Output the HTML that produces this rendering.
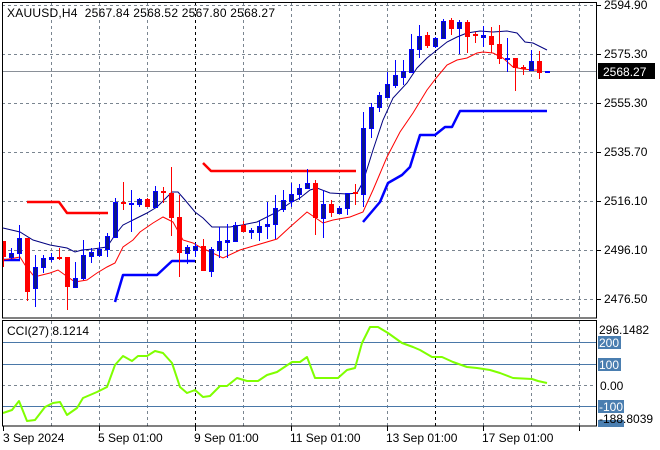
<!DOCTYPE html>
<html><head><meta charset="utf-8"><style>
html,body{margin:0;padding:0;background:#fff;width:660px;height:450px;overflow:hidden}
svg{display:block}
text{font-family:"Liberation Sans",sans-serif;font-size:12px;fill:#000}
</style></head><body>
<svg width="660" height="450" viewBox="0 0 660 450" xmlns="http://www.w3.org/2000/svg">
<rect width="660" height="450" fill="#fff"/>
<g stroke="#7a8590" stroke-width="1" stroke-dasharray="3,3">
<path d="M51.5 2V318M99.5 2V318M147.5 2V318M243.5 2V318M291.5 2V318M339.5 2V318M387.5 2V318M483.5 2V318M531.5 2V318M579.5 2V318"/>
<path d="M51.5 321V426M99.5 321V426M147.5 321V426M243.5 321V426M291.5 321V426M339.5 321V426M387.5 321V426M483.5 321V426M531.5 321V426M579.5 321V426"/>
<path d="M2 5.5H597M2 54.5H597M2 103.5H597M2 152.5H597M2 201.5H597M2 250.5H597M2 299.5H597"/>
<path d="M2 385.5H597"/>
</g>
<g stroke="#000" stroke-width="1" stroke-dasharray="3,3">
<path d="M195.5 2V318M435.5 2V318M195.5 321V426M435.5 321V426"/>
</g>
<path d="M2 71.5H597" stroke="#8a9098" stroke-width="1"/>
<path d="M2 342.5H597M2 364.5H597M2 406.5H597" stroke="#4a78a8" stroke-width="1"/>

<g fill="none" stroke-width="2.5" stroke-linejoin="round">
<path d="M27 202H59L67 213H108" stroke="#ff0000"/>
<path d="M203 163L211 171H356" stroke="#ff0000"/>
<path d="M3 260H20" stroke="#0000ff"/>
<path d="M115 302L123 275H157L172 261H195" stroke="#0000ff"/>
<path d="M363 222L380 202L388 183L402 175L410 167L420 135H435L445 127H452L460 111H547" stroke="#0000ff"/>
</g>
<path fill="none" stroke="#000080" stroke-width="1" d="M3 228L20 232L33 240L50 245L67 248L75 252L82 250L93 249L107 247L115 235L123 225L133 220L147 213L157 207L167 197L172 192L178 192L185 200L195 212L203 218L212 227L230 227L242 225L257 222L277 212L290 203L300 198L310 190L317 188L330 193L347 194L357 193L363 182L373 150L383 120L393 98L407 83L417 68L427 58L437 50L447 42L457 37L467 33L480 31L493 32L507 31L517 33L525 42L533 43L547 50"/>
<path fill="none" stroke="#ff0000" stroke-width="1" d="M3 260L20 257L25 265L33 275L38 276L50 273L58 270L65 275L75 282L87 280L97 273L107 267L115 263L123 247L133 240L140 232L153 223L163 217L173 222L183 240L193 243L200 247L223 258L240 250L250 247L277 239L290 227L307 212L323 223L333 220L350 217L363 212L373 190L387 157L400 132L413 113L427 90L437 77L447 65L457 60L467 58L477 53L483 52L493 53L503 58L513 67L523 69L533 70L540 70"/>

<g>
<g fill="#ff0000">
<rect x="3" y="241" width="1" height="26"/><rect x="2" y="241" width="4" height="16"/>
<rect x="27" y="238" width="1" height="63"/><rect x="25" y="238" width="5" height="54"/>
<rect x="59" y="248" width="1" height="12"/><rect x="57" y="257" width="5" height="2"/>
<rect x="67" y="257" width="1" height="53"/><rect x="65" y="257" width="5" height="30"/>
<rect x="123" y="182" width="1" height="28"/><rect x="121" y="202" width="5" height="2"/>
<rect x="147" y="198" width="1" height="9"/><rect x="145" y="199" width="5" height="8"/>
<rect x="163" y="187" width="1" height="16"/><rect x="161" y="191" width="5" height="2"/>
<rect x="171" y="167" width="1" height="69"/><rect x="169" y="193" width="5" height="25"/>
<rect x="179" y="195" width="1" height="82"/><rect x="177" y="217" width="5" height="36"/>
<rect x="203" y="239" width="1" height="32"/><rect x="201" y="246" width="5" height="25"/>
<rect x="243" y="221" width="1" height="11"/><rect x="241" y="225" width="5" height="7"/>
<rect x="315" y="180" width="1" height="55"/><rect x="313" y="183" width="5" height="35"/>
<rect x="331" y="200" width="1" height="17"/><rect x="329" y="204" width="5" height="9"/>
<rect x="355" y="184" width="1" height="21"/><rect x="353" y="192" width="5" height="2"/>
<rect x="427" y="32" width="1" height="16"/><rect x="425" y="35" width="5" height="11"/>
<rect x="451" y="18" width="1" height="17"/><rect x="449" y="20" width="5" height="9"/>
<rect x="467" y="20" width="1" height="33"/><rect x="465" y="22" width="5" height="15"/>
<rect x="475" y="32" width="1" height="11"/><rect x="473" y="34" width="5" height="2"/>
<rect x="491" y="27" width="1" height="26"/><rect x="489" y="36" width="5" height="9"/>
<rect x="499" y="25" width="1" height="39"/><rect x="497" y="44" width="5" height="15"/>
<rect x="515" y="58" width="1" height="33"/><rect x="513" y="58" width="5" height="10"/>
<rect x="523" y="65" width="1" height="10"/><rect x="521" y="67" width="5" height="2"/>
<rect x="539" y="51" width="1" height="28"/><rect x="537" y="61" width="5" height="12"/>
</g>
<g fill="#0000ff">
<rect x="11" y="248" width="1" height="12"/><rect x="19" y="225" width="1" height="35"/>
<rect x="35" y="255" width="1" height="52"/><rect x="43" y="255" width="1" height="18"/>
<rect x="51" y="253" width="1" height="9"/><rect x="75" y="262" width="1" height="26"/>
<rect x="83" y="240" width="1" height="40"/><rect x="91" y="248" width="1" height="15"/>
<rect x="99" y="242" width="1" height="15"/><rect x="107" y="233" width="1" height="24"/>
<rect x="115" y="198" width="1" height="40"/><rect x="131" y="190" width="1" height="42"/>
<rect x="139" y="198" width="1" height="9"/><rect x="155" y="186" width="1" height="21"/>
<rect x="187" y="245" width="1" height="19"/><rect x="195" y="243" width="1" height="14"/>
<rect x="211" y="247" width="1" height="30"/><rect x="219" y="227" width="1" height="31"/>
<rect x="227" y="224" width="1" height="34"/><rect x="235" y="222" width="1" height="19"/>
<rect x="251" y="228" width="1" height="11"/><rect x="259" y="221" width="1" height="20"/>
<rect x="267" y="202" width="1" height="37"/><rect x="275" y="195" width="1" height="44"/>
<rect x="283" y="190" width="1" height="22"/><rect x="291" y="183" width="1" height="24"/>
<rect x="299" y="184" width="1" height="16"/><rect x="307" y="169" width="1" height="19"/>
<rect x="323" y="190" width="1" height="48"/><rect x="339" y="206" width="1" height="7"/>
<rect x="347" y="193" width="1" height="22"/><rect x="363" y="112" width="1" height="95"/>
<rect x="371" y="103" width="1" height="35"/><rect x="379" y="92" width="1" height="20"/>
<rect x="387" y="72" width="1" height="26"/><rect x="395" y="60" width="1" height="28"/>
<rect x="403" y="60" width="1" height="25"/><rect x="411" y="34" width="1" height="38"/>
<rect x="419" y="25" width="1" height="33"/><rect x="435" y="37" width="1" height="11"/>
<rect x="443" y="19" width="1" height="19"/><rect x="459" y="20" width="1" height="34"/>
<rect x="483" y="26" width="1" height="21"/><rect x="507" y="38" width="1" height="34"/>
<rect x="531" y="50" width="1" height="20"/><rect x="545" y="71" width="5" height="2"/>
</g>
<g fill="#0c168c" stroke="#0000ff" stroke-width="1">
<rect x="9.5" y="253.5" width="4" height="4"/><rect x="17.5" y="238.5" width="4" height="15"/>
<rect x="33.5" y="267.5" width="4" height="21"/><rect x="41.5" y="258.5" width="4" height="9"/>
<rect x="49.5" y="257.5" width="4" height="2"/><rect x="73.5" y="278.5" width="4" height="9"/>
<rect x="81.5" y="255.5" width="4" height="23"/><rect x="89.5" y="252.5" width="4" height="4"/>
<rect x="97.5" y="249.5" width="4" height="6"/><rect x="105.5" y="236.5" width="4" height="13"/>
<rect x="113.5" y="202.5" width="4" height="35"/><rect x="129.5" y="203.5" width="4" height="1"/>
<rect x="137.5" y="199.5" width="4" height="5"/><rect x="153.5" y="191.5" width="4" height="16"/>
<rect x="185.5" y="247.5" width="4" height="6"/><rect x="193.5" y="246.5" width="4" height="4"/>
<rect x="209.5" y="249.5" width="4" height="22"/><rect x="217.5" y="241.5" width="4" height="9"/>
<rect x="225.5" y="240.5" width="4" height="2"/><rect x="233.5" y="225.5" width="4" height="16"/>
<rect x="249.5" y="230.5" width="4" height="2"/><rect x="257.5" y="226.5" width="4" height="6"/>
<rect x="265.5" y="224.5" width="4" height="2"/><rect x="273.5" y="208.5" width="4" height="16"/>
<rect x="281.5" y="200.5" width="4" height="9"/><rect x="289.5" y="194.5" width="4" height="7"/>
<rect x="297.5" y="188.5" width="4" height="6"/><rect x="305.5" y="183.5" width="4" height="5"/>
<rect x="321.5" y="204.5" width="4" height="14"/><rect x="337.5" y="208.5" width="4" height="5"/>
<rect x="345.5" y="193.5" width="4" height="15"/><rect x="361.5" y="128.5" width="4" height="66"/>
<rect x="369.5" y="107.5" width="4" height="21"/><rect x="377.5" y="95.5" width="4" height="12"/>
<rect x="385.5" y="84.5" width="4" height="13"/><rect x="393.5" y="75.5" width="4" height="10"/>
<rect x="401.5" y="71.5" width="4" height="6"/><rect x="409.5" y="49.5" width="4" height="23"/>
<rect x="417.5" y="36.5" width="4" height="13"/><rect x="433.5" y="38.5" width="4" height="8"/>
<rect x="441.5" y="21.5" width="4" height="17"/><rect x="457.5" y="22.5" width="4" height="6"/>
<rect x="481.5" y="35.5" width="4" height="2"/><rect x="505.5" y="58.5" width="4" height="1"/>
<rect x="529.5" y="61.5" width="4" height="9"/>
</g>
</g>

<path fill="none" stroke="#7fff00" stroke-width="2" stroke-linejoin="round" d="M3 413L12 410L19 401L27 421L35 420L45 407L53 403L60 402L67 415L77 408L83 398L97 392L107 387L115 365L123 356L132 361L138 356L147 356L155 351L163 353L172 363L180 387L187 393L195 390L203 397L210 396L220 386L227 386L237 378L247 381L258 381L267 375L277 372L292 362L300 362L307 357L315 378L338 378L347 370L355 368L362 343L370 327L378 327L388 333L402 343L413 347L420 350L432 357L442 357L453 362L467 367L477 368L490 370L500 373L513 378L532 379L538 381L547 383"/>

<g fill="none" stroke="#000" stroke-width="1">
<rect x="2.5" y="2.5" width="594" height="315.5"/>
<rect x="2.5" y="320.5" width="594" height="105.5"/>
<path d="M3.5 426V431M99.5 426V431M195.5 426V431M291.5 426V431M387.5 426V431M483.5 426V431M579.5 426V431"/>
<path d="M597 5.5H601M597 54.5H601M597 103.5H601M597 152.5H601M597 201.5H601M597 250.5H601M597 299.5H601"/>
</g>

<text x="7" y="17" textLength="268" lengthAdjust="spacing" xml:space="preserve">XAUUSD,H4  2567.84 2568.52 2567.80 2568.27</text>
<text x="7" y="335">CCI(27) 8.1214</text>

<text x="604" y="9">2594.90</text>
<text x="604" y="58">2575.30</text>
<rect x="598" y="63" width="57" height="16" fill="#000"/>
<text x="603" y="76" style="fill:#fff">2568.27</text>
<text x="604" y="107">2555.30</text>
<text x="604" y="156">2535.70</text>
<text x="604" y="205">2516.10</text>
<text x="604" y="254">2496.10</text>
<text x="604" y="303">2476.50</text>

<text x="599" y="334">296.1482</text>
<rect x="598" y="336" width="23" height="13" fill="#4a7eb0"/>
<text x="599" y="347" style="fill:#fff">200</text>
<rect x="598" y="358" width="23" height="13" fill="#4a7eb0"/>
<text x="599" y="369" style="fill:#fff">100</text>
<text x="600" y="390">0.00</text>
<rect x="598" y="420" width="26" height="7" fill="#4a7eb0"/>
<rect x="598" y="400" width="26" height="13" fill="#4a7eb0"/>
<text x="599" y="411" style="fill:#fff">-100</text>
<text x="599" y="423">-188.8039</text>

<text x="3" y="442">3 Sep 2024</text>
<text x="98" y="442">5 Sep 01:00</text>
<text x="194" y="442">9 Sep 01:00</text>
<text x="290" y="442">11 Sep 01:00</text>
<text x="386" y="442">13 Sep 01:00</text>
<text x="482" y="442">17 Sep 01:00</text>
</svg>
</body></html>
